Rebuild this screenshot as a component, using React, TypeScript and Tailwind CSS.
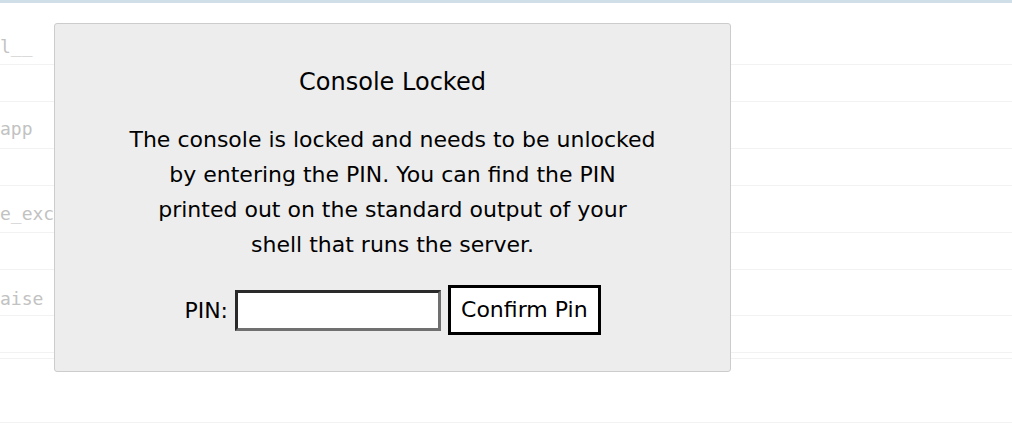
import React from 'react';

// faint traceback rows behind the locked-console overlay
const rows = [
  { h: 'h-[62px]', pt: 'pt-[33px]', text: 'l__' },
  { h: 'h-[37px]', pt: '', text: '' },
  { h: 'h-[47px]', pt: 'pt-[16px]', text: 'app' },
  { h: 'h-[37px]', pt: '', text: '' },
  { h: 'h-[47px]', pt: 'pt-[17px]', text: 'e_exc' },
  { h: 'h-[37px]', pt: '', text: '' },
  { h: 'h-[46px]', pt: 'pt-[18px]', text: 'aise' },
  { h: 'h-[37px]', pt: '', text: '' },
  { h: 'h-[6px]', pt: '', text: '' },
  { h: 'h-[64px]', pt: '', text: '' },
];

const App = () => {
  return (
    <div className="relative h-[423px] w-[1012px] overflow-hidden bg-white font-['DejaVu_Sans',sans-serif] text-black">
      <div className="h-[3px] bg-[#d0dfe7]" />

      <div className="font-['DejaVu_Sans_Mono',monospace] text-[18px] leading-[22px] text-[#c2c2c2]">
        {rows.map((row, i) => (
          <div key={i} className={`${row.h} ${row.pt} border-b border-[#f2f2f2] whitespace-pre`}>
            {row.text}
          </div>
        ))}
      </div>

      {/* PIN prompt */}
      <div className="absolute left-[54px] top-[23px] flex h-[349px] w-[677px] flex-col items-center rounded-[3px] border border-[#cccccc] bg-[#ededed] pt-[44px]">
        <h3 className="text-[24px] leading-[28px] font-normal">Console Locked</h3>
        <p className="mt-[26px] text-center text-[22px] leading-[35px] whitespace-nowrap">
          The console is locked and needs to be unlocked
          <br />
          by entering the PIN. You can find the PIN
          <br />
          printed out on the standard output of your
          <br />
          shell that runs the server.
        </p>
        <div className="mt-[23px] flex items-center text-[22px]">
          <label>PIN:</label>
          <input
            type="password"
            className="ml-[7px] h-[41px] w-[206px] border-[3px] border-t-[#2a2a2a] border-l-[#2a2a2a] border-b-[#707070] border-r-[#707070] bg-white outline-none"
          />
          <button className="ml-[7px] h-[50px] border-[3px] border-black bg-white px-[10px] leading-none">
            Confirm Pin
          </button>
        </div>
      </div>
    </div>
  );
};

export default App;
